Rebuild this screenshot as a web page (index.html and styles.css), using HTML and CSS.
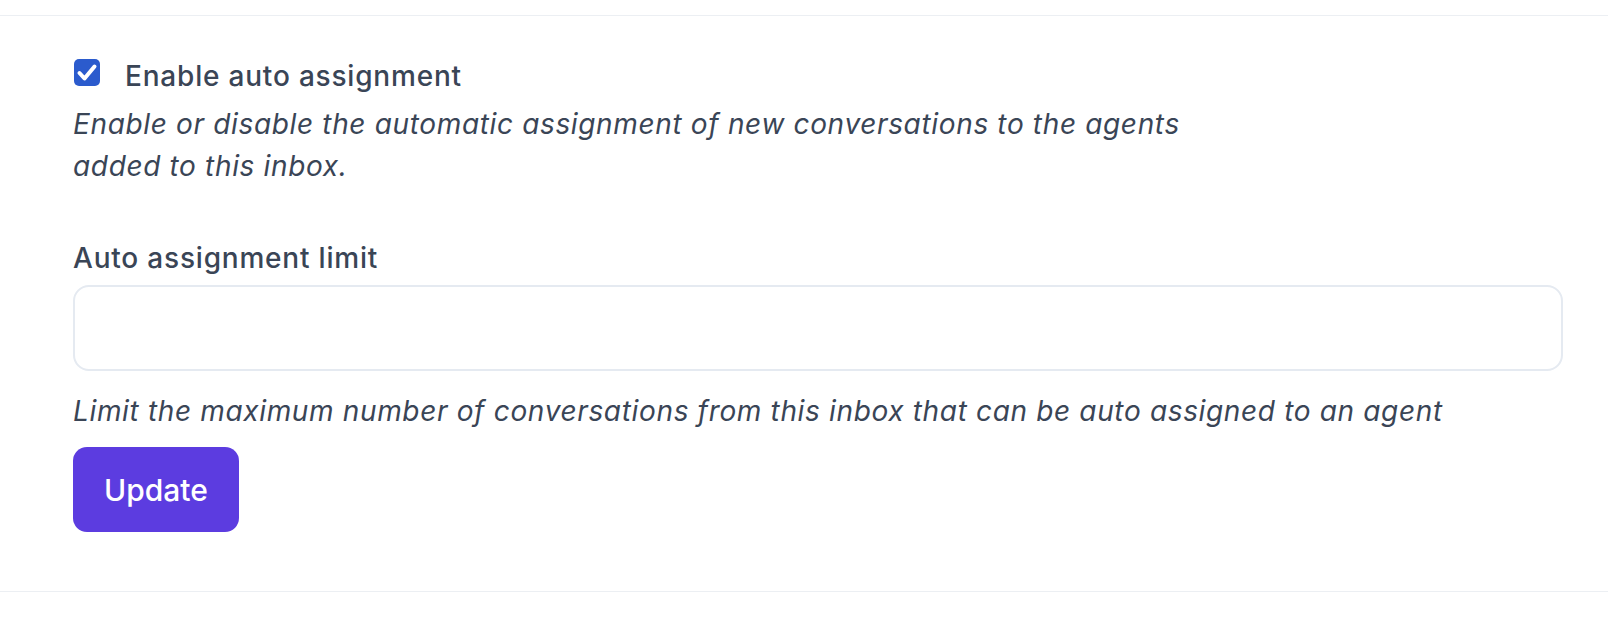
FILE: index.html
```html
<!DOCTYPE html>
<html lang="en">
<head>
<meta charset="utf-8">
<title>Inbox settings</title>
<link rel="stylesheet" href="styles.css">
</head>
<body>
<section class="settings">
  <label class="check-row">
    <span class="checkbox" aria-hidden="true">
      <svg viewBox="0 0 26 27" width="26" height="27"><path d="M5.5 14 L10.5 19.5 L20.5 7.5" fill="none" stroke="#fff" stroke-width="4" stroke-linecap="round" stroke-linejoin="round"/></svg>
    </span>
    <span class="check-label">Enable auto assignment</span>
  </label>
  <p class="help help-wide">Enable or disable the automatic assignment of new conversations to the agents added to this inbox.</p>

  <label class="field-label" for="limit">Auto assignment limit</label>
  <input id="limit" class="text-input" type="text">
  <p class="help help-tight">Limit the maximum number of conversations from this inbox that can be auto assigned to an agent</p>

  <button class="btn-primary" type="button">Update</button>
</section>
</body>
</html>
```

FILE: styles.css
```css
* { box-sizing: border-box; }

body {
  margin: 0;
  background: #ffffff;
  font-family: "Inter", "Noto Sans", sans-serif;
  color: #3a4556;
}

.settings {
  margin-top: 15px;
  border-top: 1px solid #eceff3;
  border-bottom: 1px solid #eceff3;
  padding: 39px 45px 59px 73px;
  display: flex;
  flex-direction: column;
  align-items: flex-start;
}

.check-row {
  display: flex;
  align-items: flex-start;
  gap: 25px;
  font-size: 28px;
  line-height: 42px;
  font-weight: 500;
  letter-spacing: 0.8px;
  cursor: pointer;
}

.checkbox {
  width: 26px;
  height: 27px;
  margin-top: 4px;
  margin-left: 1px;
  border-radius: 5px;
  background: #2b5bcd;
  display: flex;
  align-items: center;
  justify-content: center;
}

.checkbox svg { display: block; }

.help {
  margin: 0;
  font-size: 28px;
  line-height: 42px;
  font-style: italic;
  font-weight: 400;
  letter-spacing: 0.65px;
  color: #3a4556;
}

.help-wide {
  margin-top: 6px;
  max-width: 1150px;
}

.field-label {
  margin-top: 50px;
  font-size: 28px;
  line-height: 42px;
  font-weight: 500;
  letter-spacing: 0.8px;
}

.text-input {
  margin-top: 6px;
  width: 100%;
  height: 86px;
  border: 2px solid #e5eaf1;
  border-radius: 16px;
  background: #fff;
  font: inherit;
  font-size: 28px;
  padding: 0 24px;
  outline: none;
}

.help-tight {
  margin-top: 19px;
}

.btn-primary {
  margin-top: 15px;
  height: 85px;
  padding: 0 31px;
  border: none;
  border-radius: 14px;
  background: #5c3ce0;
  color: #ffffff;
  font-family: "Inter", sans-serif;
  font-size: 30px;
  font-weight: 500;
  cursor: pointer;
}
```
